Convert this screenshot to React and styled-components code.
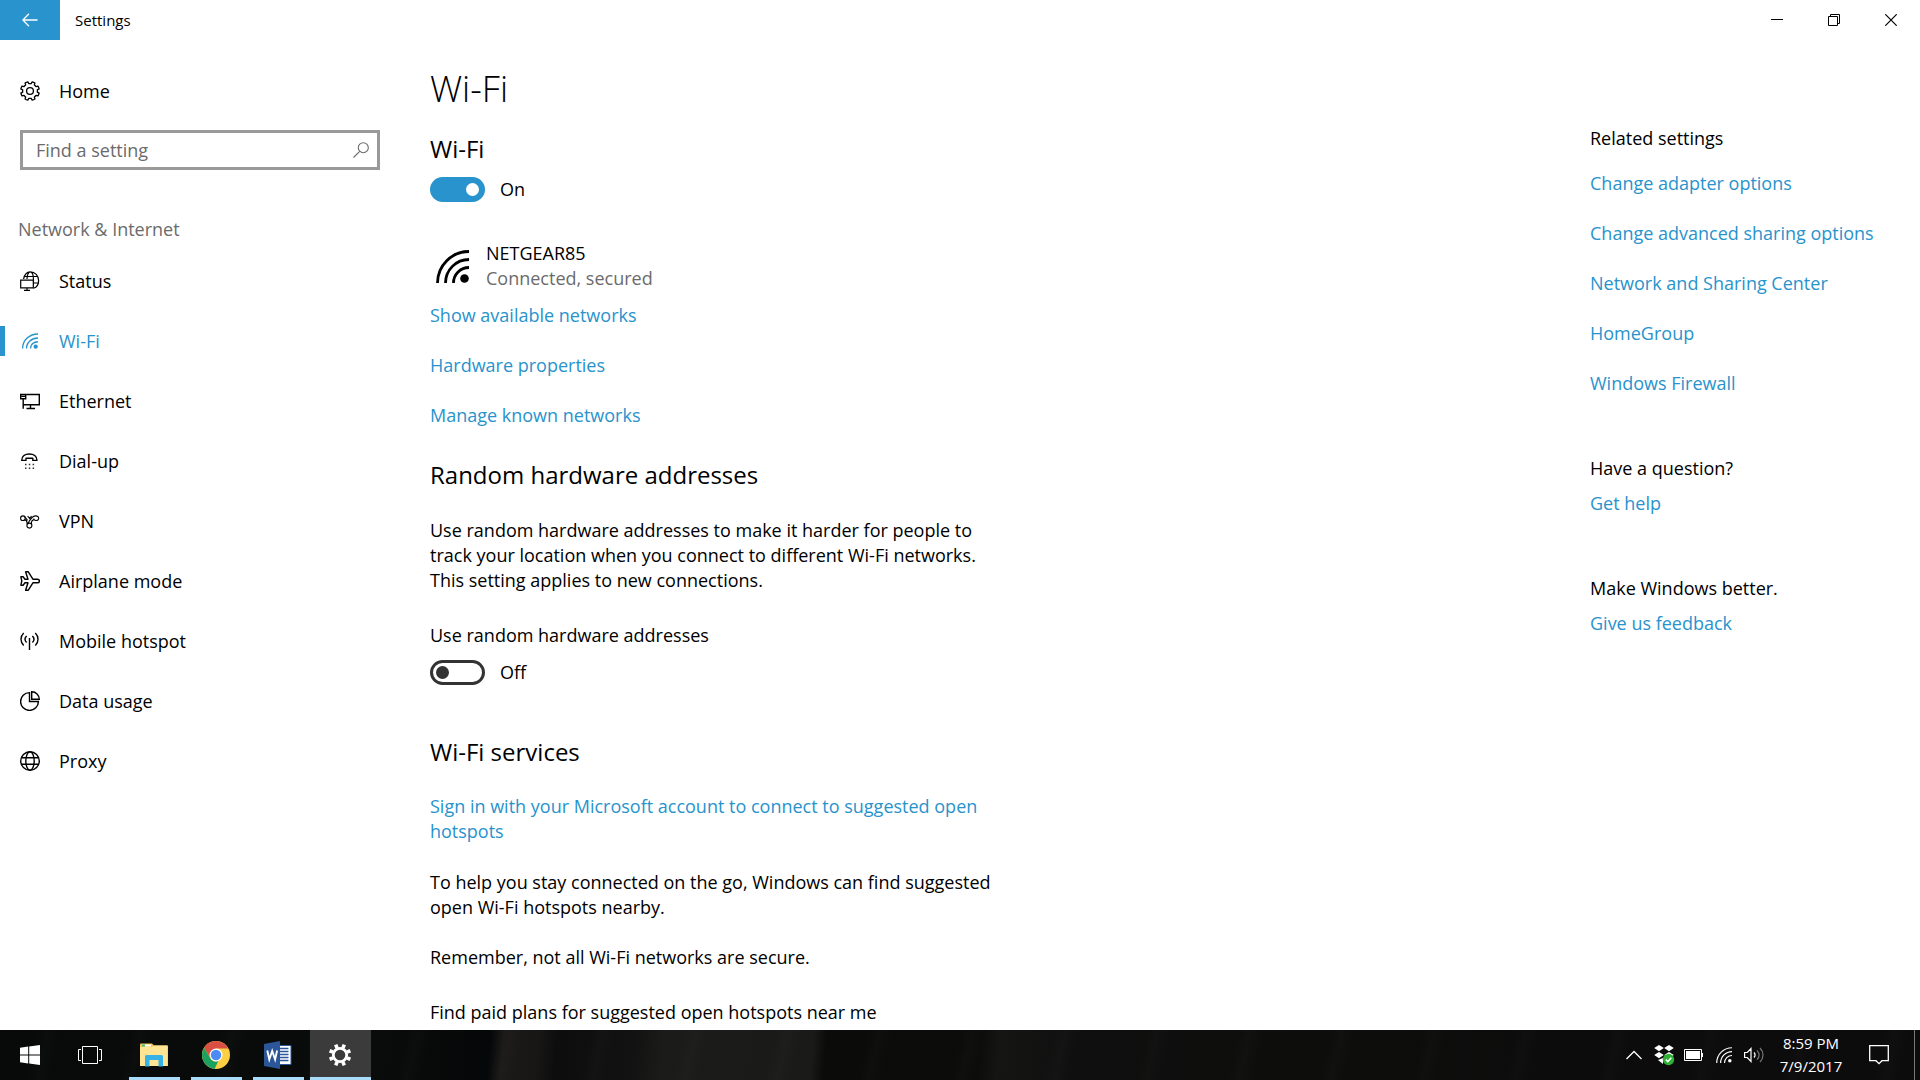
import React, { useState } from "react";
import styled, { createGlobalStyle } from "styled-components";

const ACCENT = "#2893cc";

const GlobalStyle = createGlobalStyle`
  *, *::before, *::after { box-sizing: border-box; }
  body {
    margin: 0;
    background: #fff;
    color: #000;
    font: 400 18px/25px "Open Sans", "Noto Sans", sans-serif;
  }
  button, input { font: inherit; color: inherit; }
  h1, h2, h3, p, ul { margin: 0; padding: 0; font-weight: 400; }
  ul { list-style: none; }
  svg { display: block; flex: none; }
`;

const Desktop = styled.div`
  display: flex;
  flex-direction: column;
  height: 100vh;
  overflow: hidden;
`;

const PlainButton = styled.button`
  display: flex;
  align-items: center;
  justify-content: center;
  padding: 0;
  border: 0;
  background: none;
`;

/* Title bar */
const TitleBar = styled.header`
  display: flex;
  flex: none;
  height: 40px;
  padding-right: 1px;
`;
const BackButton = styled(PlainButton)`
  width: 60px;
  background: ${ACCENT};
  color: #fff;
`;
const WindowTitle = styled.span`
  flex: 1;
  padding-left: 15px;
  font-size: 15px;
  line-height: 40px;
`;
const WindowButton = styled(PlainButton)`
  width: 57px;
`;

/* Page */
const Body = styled.div`
  display: flex;
  flex: 1;
  min-height: 0;
  overflow: hidden;
`;
const Sidebar = styled.nav`
  flex: none;
  width: 400px;
  padding-top: 21px;
`;
const NavLink = styled.a`
  display: flex;
  align-items: center;
  gap: 19px;
  height: 60px;
  padding-left: 20px;
  color: ${(p) => (p.$active ? ACCENT : "#000")};
  text-decoration: none;
  background: ${(p) => (p.$active ? `linear-gradient(${ACCENT}, ${ACCENT}) 0 50% / 5px 30px no-repeat` : "none")};
`;
const SearchBox = styled.form`
  display: flex;
  height: 40px;
  margin: 9px 20px 40px;
  border: 3px solid #999;
  color: #6b6b6b;
`;
const SearchInput = styled.input`
  flex: 1;
  min-width: 0;
  padding: 0 0 0 13px;
  border: 0;
  outline: 0;
  background: none;
  &::placeholder { color: #6b6b6b; opacity: 1; }
`;
const SearchButton = styled(PlainButton)`
  width: 33px;
`;
const NavHeading = styled.h2`
  height: 41px;
  padding: 7px 0 0 18px;
  color: #6b6b6b;
  font-size: 18px;
  line-height: 25px;
`;

const Main = styled.main`
  flex: 1;
  min-width: 0;
  padding: 25px 30px 0;
`;
const Column = styled.div`
  max-width: 580px;
`;
const PageTitle = styled.h1`
  font-size: 36px;
  font-weight: 300;
  line-height: 48px;
`;
const SectionTitle = styled.h2`
  margin-top: ${(p) => p.$space}px;
  font-size: 24px;
  line-height: 32px;
`;
const Text = styled.p`
  margin-top: ${(p) => p.$space || 0}px;
  color: ${(p) => (p.$muted ? "#6b6b6b" : "inherit")};
`;
const LinkText = styled.a`
  color: ${ACCENT};
  text-decoration: none;
`;
const LinkList = styled.ul`
  display: grid;
  gap: 25px;
  margin-top: ${(p) => p.$space}px;
`;
const ToggleRow = styled.label`
  display: flex;
  gap: 15px;
  margin-top: 12px;
`;
const Toggle = styled.input`
  appearance: none;
  flex: none;
  display: flex;
  align-items: center;
  width: 55px;
  height: 25px;
  margin: 0;
  padding: 0 3px;
  border: 3px solid #333;
  border-radius: 13px;
  &::before {
    content: "";
    width: 13px;
    height: 13px;
    border-radius: 50%;
    background: #333;
  }
  &:checked {
    justify-content: flex-end;
    border-color: ${ACCENT};
    background: ${ACCENT};
  }
  &:checked::before { background: #fff; }
`;
const Network = styled.div`
  display: flex;
  align-items: center;
  gap: 17px;
  margin-top: 39px;
  padding-left: 6px;
`;

const Related = styled.aside`
  flex: none;
  width: 330px;
  padding-top: 86px;
`;
const RelatedGroup = styled.section`
  margin-bottom: 60px;
`;
const RelatedTitle = styled.h3`
  font-size: 18px;
`;

/* Taskbar */
const Taskbar = styled.footer`
  display: flex;
  flex: none;
  height: 50px;
  color: #fff;
  background:
    repeating-linear-gradient(103deg, transparent 0 37px, rgba(255, 255, 255, 0.015) 48px, transparent 61px 90px),
    linear-gradient(95deg, #080909 0%, #0a0b0b 20%, #050808 25.5%, #1a1918 26.2%, #181716 28%, #0d0d0d 29%, #121212 33%, #1b1b19 34.5%, #1a1a18 42.3%, #0b0b0a 43%, #0c0c0b 51%, #151514 52%, #0f0f0f 56%, #0d0d0c 70%, #0b0c0b 80%, #0c0c0c 100%);
`;
const TaskButton = styled(PlainButton)`
  width: 60px;
`;
const Apps = styled.div`
  display: flex;
  flex: 1;
  gap: 1px;
  padding-left: 4px;
`;
const AppButton = styled(PlainButton)`
  width: 61px;
  padding-right: 2px;
  background:
    linear-gradient(#a9dbfb, #a9dbfb) 50% 100% / ${(p) => (p.$active ? 61 : 51)}px 3px no-repeat,
    ${(p) => (p.$active ? "#3b3b3b" : "transparent")};
`;
const Tray = styled.div`
  display: flex;
  align-items: center;
`;
const TrayIcons = styled.div`
  display: flex;
  margin-right: 9px;
`;
const TrayButton = styled(PlainButton)`
  width: 30px;
  height: 50px;
`;
const Clock = styled.button`
  width: 66px;
  padding: 0;
  border: 0;
  background: none;
  font-size: 15px;
  line-height: 23px;
  text-align: center;
`;
const ActionButton = styled(PlainButton)`
  width: 70px;
  height: 50px;
`;
const ShowDesktop = styled(PlainButton)`
  width: 6px;
  height: 50px;
  border-left: 1px solid #777;
`;

/* Icons */
const Icon = ({ size = 20, w, h, children, stroke = 1.4, box }) => (
  <svg
    width={w || size}
    height={h || size}
    viewBox={box || `0 0 ${w || size} ${h || size}`}
    fill="none"
    stroke="currentColor"
    strokeWidth={stroke}
    aria-hidden="true"
  >
    {children}
  </svg>
);

const gearPath = (cx, cy, outer, inner, teeth, wide, narrow) => {
  const step = (Math.PI * 2) / teeth;
  const at = (r, a) => `${(cx + r * Math.cos(a)).toFixed(2)} ${(cy + r * Math.sin(a)).toFixed(2)}`;
  let d = "";
  for (let i = 0; i < teeth; i += 1) {
    const a = i * step + step / 2;
    d += `${i ? "L" : "M"}${at(inner, a - step * wide)}L${at(outer, a - step * narrow)}`;
    d += `A${outer} ${outer} 0 0 1 ${at(outer, a + step * narrow)}L${at(inner, a + step * wide)}`;
    d += `A${inner} ${inner} 0 0 1 ${at(inner, a + step - step * wide)}`;
  }
  return `${d}Z`;
};

const HomeIcon = () => (
  <Icon stroke={1.3}>
    <path d={gearPath(10, 10, 9.4, 7.4, 8, 0.3, 0.2)} strokeLinejoin="round" />
    <circle cx="10" cy="10" r="3.4" />
  </Icon>
);
const StatusIcon = () => (
  <Icon stroke={1.2}>
    <path d="M3.6 8C4.5 3.6 7 .9 10.2.9c4.900 0 8.400 3.800 8.400 8.600 0 4.300-2 6.900-5 7.800M4.300 5.500h13.200M13.500 12h4.600M7 8c.3-4.300 1.500-7.100 3.200-7.100 2 0 3.300 3.300 3.300 8.600 0 2.300-.1 3.500-.5 5" />
    <path d="M.700 9.200h12.600v7.600H.700z" fill="#fff" />
    <path d="M7 17v2.300M4 19.300h6" />
  </Icon>
);
const WifiArcs = ({ size, stroke, dot }) => (
  <svg width={size} height={size} viewBox="0 0 33 33" fill="none" stroke="currentColor" strokeWidth={stroke} aria-hidden="true">
    <path d="M1.500 33A31.500 31.500 0 0 1 33 1.500M9.500 33A23.500 23.500 0 0 1 33 9.500M17.500 33A15.500 15.500 0 0 1 33 17.500" />
    <circle cx="28.500" cy="28.500" r={dot} fill="currentColor" stroke="none" />
  </svg>
);
const WifiNavIcon = () => (
  <Icon>
    <path d="M2.600 17.500C2.600 9 9.500 3 18 3M6.500 17.500C6.500 11.500 11.500 7 18 7M10.500 17.500c0-4 3.200-6.800 7.500-6.800" />
    <circle cx="15.700" cy="15.700" r="2.100" fill="currentColor" stroke="none" />
  </Icon>
);
const EthernetIcon = () => (
  <Icon>
    <path d="M6.500 3.500h12.800v10.200H3.500M.700 3.500h5v4.300h-5zM1.500 5.400h3.500M3.200 8v9.800M10.500 13.700v3.800M6.500 17.500H15" />
  </Icon>
);
const DialIcon = () => (
  <Icon>
    <path d="M1.700 9.400C1.700 5.200 5 3 9.300 3S17 5.200 17 9.400h-4.200V7.200H6v2.200z" strokeLinejoin="round" />
    <path d="M5 13.500h1.500M8.800 13.500h1.500M12.600 13.500h1.500M5 17.300h1.500M8.800 17.300h1.500M12.600 17.300h1.500" stroke="#333" />
  </Icon>
);
const VpnIcon = () => (
  <Icon stroke={1.1}>
    <circle cx="2.900" cy="7.200" r="2.300" />
    <circle cx="9.400" cy="14.600" r="2.500" />
    <path d="M4.800 5.800c1.400 1.300 2.300 2.600 2.500 3.900M4.900 8.400c1.900 1 2.500 2.300 2.300 5M7.600 5l2 2.400 2-2.400M11.600 13.400c-.5-2.500.5-4.400 2.500-4.800M7.800 12.700c1.500-2.500 3.300-7.200 7.500-7.800 2-.2 3.400.900 3.400 2.400s-1.300 2.300-2.700 2.200c-1.300 0-2.300-.900-2.300-2.100" />
  </Icon>
);
const PlaneIcon = () => (
  <Icon>
    <path d="M.9 5.800h2.200l1.900 2.400h3L5.600.8h2.700l4.600 7.400h4.700c1.200 0 1.800.8 1.800 1.800s-.6 1.800-1.800 1.800h-4.700l-4.600 7.400H5.600L8 11.800H5l-1.900 2.400H.9L1.800 10z" strokeLinejoin="round" />
  </Icon>
);
const HotspotIcon = () => (
  <Icon>
    <path d="M9.500 7v12M6.600 5c-1.900 1.900-1.900 4.600 0 6.500M12.400 5c1.900 1.900 1.900 4.600 0 6.500M3.700 2c-3.600 3.500-3.600 9 0 12.500M15.300 2c3.600 3.500 3.600 9 0 12.500" />
  </Icon>
);
const DataIcon = () => (
  <Icon>
    <path d="M9.500 1.600a8.900 8.900 0 1 0 8.900 8.900H9.500z" />
    <path d="M11.700.7a7.600 7.600 0 0 1 7.600 7.600h-7.600z" />
  </Icon>
);
const GlobeIcon = () => (
  <Icon>
    <circle cx="10" cy="10" r="9.300" />
    <ellipse cx="10" cy="10" rx="4.200" ry="9.300" />
    <path d="M1.500 6.700h17M1.500 13.300h17" />
  </Icon>
);
const SearchIcon = () => (
  <Icon size={16} stroke={1.1}>
    <circle cx="10.300" cy="5.700" r="5" />
    <path d="M6.700 9.300L.5 15.500" />
  </Icon>
);

const ExplorerIcon = () => (
  <svg width="28" height="24" viewBox="0 0 28 24" aria-hidden="true">
    <path d="M0 1.500Q0 .5 1 .5h11l2 2h13q1 0 1 1V23H0z" fill="#f2c74b" />
    <path d="M0 4h12l2-1.500h13.500V23H0z" fill="#ffe593" />
    <path d="M2 1.500h9v2H2z" fill="#fff" />
    <path d="M2 1.500h3v2H2z" fill="#49b36b" />
    <path d="M5 23V13.500Q5 12 6.500 12h15q1.500 0 1.500 1.500V23.500h-4.500V17h-9v6.500H5z" fill="#38b1e6" />
  </svg>
);
const ChromeIcon = () => (
  <svg width="28" height="28" viewBox="0 0 28 28" aria-hidden="true">
    <circle cx="14" cy="14" r="14" fill="#fccf43" />
    <path d="M14 0A14 14 0 0 1 26.300 7.500H14L8.400 17.300 2 6.800A14 14 0 0 1 14 0z" fill="#da4f43" />
    <path d="M2 6.800l6.300 10.400a6.500 6.500 0 0 0 8 2.900L12.600 27.900A14 14 0 0 1 2 6.800z" fill="#1ba261" />
    <circle cx="14" cy="14" r="6.500" fill="#fff" />
    <circle cx="14" cy="14" r="5.200" fill="#4c8bf5" />
  </svg>
);
const WordIcon = () => (
  <svg width="28" height="28" viewBox="0 0 28 28" aria-hidden="true">
    <path d="M15 4.500h12v19H15z" fill="#fff" stroke="#2b579a" />
    <path d="M16 7.500h8.500M16 10.500h8.500M16 13.500h8.500M16 16.500h8.500M16 19.500h8.500" stroke="#2b579a" strokeWidth="1.400" />
    <path d="M0 3l16-3v28L0 25z" fill="#2b579a" />
    <path d="M3.300 9.500l2 9 2.900-8.500 2.900 8.500 2-9" fill="none" stroke="#fff" strokeWidth="1.900" />
  </svg>
);
const TaskGearIcon = () => (
  <svg width="24" height="24" viewBox="0 0 24 24" fill="none" stroke="#fff" aria-hidden="true">
    <circle cx="12" cy="12" r="6.700" strokeWidth="2.800" />
    <g strokeWidth="3.600">
      {[22.5, 67.5, 112.5, 157.5, 202.5, 247.5, 292.5, 337.5].map((angle) => (
        <path key={angle} d="M12 4.500V.8" transform={`rotate(${angle} 12 12)`} />
      ))}
    </g>
  </svg>
);
const DropboxIcon = () => (
  <svg width="21" height="21" viewBox="0 0 21 21" aria-hidden="true">
    <path d="M5 0l4.800 3L5 6.200.2 3zM15 0l4.800 3L15 6.200 10.200 3zM5 7l4.800 3L5 13.200.2 10zM15 7l4.800 3L15 13.200 10.200 10zM4 15l5-2v6z" fill="#fff" />
    <circle cx="14.500" cy="14.500" r="5.700" fill="#2eb135" />
    <path d="M11.800 14.600l2 2 3.500-3.800" fill="none" stroke="#fff" strokeWidth="1.500" />
  </svg>
);

const NAV = [
  ["Status", StatusIcon],
  ["Wi-Fi", WifiNavIcon],
  ["Ethernet", EthernetIcon],
  ["Dial-up", DialIcon],
  ["VPN", VpnIcon],
  ["Airplane mode", PlaneIcon],
  ["Mobile hotspot", HotspotIcon],
  ["Data usage", DataIcon],
  ["Proxy", GlobeIcon],
];
const NETWORK_LINKS = ["Show available networks", "Hardware properties", "Manage known networks"];
const RELATED_LINKS = [
  "Change adapter options",
  "Change advanced sharing options",
  "Network and Sharing Center",
  "HomeGroup",
  "Windows Firewall",
];

const Links = ({ items, space }) => (
  <LinkList $space={space}>
    {items.map((item) => (
      <li key={item}>
        <LinkText href="#">{item}</LinkText>
      </li>
    ))}
  </LinkList>
);

const Switch = ({ initial, label }) => {
  const [on, setOn] = useState(initial);
  return (
    <ToggleRow>
      <Toggle type="checkbox" role="switch" aria-label={label} checked={on} onChange={() => setOn(!on)} />
      <span>{on ? "On" : "Off"}</span>
    </ToggleRow>
  );
};

export default function App() {
  return (
    <Desktop>
      <GlobalStyle />
      <TitleBar>
        <BackButton aria-label="Back">
          <Icon w={16} h={14} stroke={1.3}>
            <path d="M15.500 7H1M7 .8L.9 7 7 13.200" />
          </Icon>
        </BackButton>
        <WindowTitle>Settings</WindowTitle>
        <WindowButton aria-label="Minimize">
          <Icon size={12} stroke={1}><path d="M0 5.500h12" /></Icon>
        </WindowButton>
        <WindowButton aria-label="Restore">
          <Icon size={12} stroke={1}><path d="M.5 2.500h9v9h-9zM2.500 2.500v-2h9v9h-2" /></Icon>
        </WindowButton>
        <WindowButton aria-label="Close">
          <Icon size={12} stroke={1.2}><path d="M.3.3l11.400 11.400M11.700.3L.3 11.700" /></Icon>
        </WindowButton>
      </TitleBar>

      <Body>
        <Sidebar>
          <NavLink href="#"><HomeIcon />Home</NavLink>
          <SearchBox onSubmit={(e) => e.preventDefault()}>
            <SearchInput type="text" placeholder="Find a setting" aria-label="Find a setting" />
            <SearchButton aria-label="Search"><SearchIcon /></SearchButton>
          </SearchBox>
          <NavHeading>Network &amp; Internet</NavHeading>
          {NAV.map(([name, Glyph]) => (
            <NavLink key={name} href="#" $active={name === "Wi-Fi"}>
              <Glyph />
              {name}
            </NavLink>
          ))}
        </Sidebar>

        <Main>
          <Column>
            <PageTitle>Wi-Fi</PageTitle>
            <SectionTitle $space={20}>Wi-Fi</SectionTitle>
            <Switch initial label="Wi-Fi" />
            <Network>
              <WifiArcs size={33} stroke={2.800} dot={4.300} />
              <div>
                <Text>NETGEAR85</Text>
                <Text $muted>Connected, secured</Text>
              </div>
            </Network>
            <Links items={NETWORK_LINKS} space={12} />

            <SectionTitle $space={31}>Random hardware addresses</SectionTitle>
            <Text $space={27}>
              Use random hardware addresses to make it harder for people to track your location when you connect to
              different Wi-Fi networks. This setting applies to new connections.
            </Text>
            <Text $space={30}>Use random hardware addresses</Text>
            <Switch initial={false} label="Use random hardware addresses" />

            <SectionTitle $space={51}>Wi-Fi services</SectionTitle>
            <Text $space={26}>
              <LinkText href="#">Sign in with your Microsoft account to connect to suggested open hotspots</LinkText>
            </Text>
            <Text $space={26}>
              To help you stay connected on the go, Windows can find suggested open Wi-Fi hotspots nearby.
            </Text>
            <Text $space={25}>Remember, not all Wi-Fi networks are secure.</Text>
            <Text $space={30}>Find paid plans for suggested open hotspots near me</Text>
          </Column>
        </Main>

        <Related>
          <RelatedGroup>
            <RelatedTitle>Related settings</RelatedTitle>
            <Links items={RELATED_LINKS} space={20} />
          </RelatedGroup>
          <RelatedGroup>
            <RelatedTitle>Have a question?</RelatedTitle>
            <Links items={["Get help"]} space={10} />
          </RelatedGroup>
          <RelatedGroup>
            <RelatedTitle>Make Windows better.</RelatedTitle>
            <Links items={["Give us feedback"]} space={10} />
          </RelatedGroup>
        </Related>
      </Body>

      <Taskbar>
        <TaskButton aria-label="Start">
          <svg width="20" height="20" viewBox="0 0 20 20" fill="#fff" aria-hidden="true">
            <path d="M0 2.800L8.200 1.600v7.900H0zM9.200 1.500L20 0v9.500H9.200zM0 10.500h8.200v7.900L0 17.200zM9.200 10.500H20V20L9.200 18.500z" />
          </svg>
        </TaskButton>
        <TaskButton aria-label="Task View">
          <Icon w={24} h={18} stroke={1}>
            <path d="M4.500.5h15v17h-15zM3 3.500H.5v11H3M21 3.500h2.500v11H21" />
          </Icon>
        </TaskButton>
        <Apps>
          <AppButton aria-label="File Explorer"><ExplorerIcon /></AppButton>
          <AppButton aria-label="Chrome"><ChromeIcon /></AppButton>
          <AppButton aria-label="Word"><WordIcon /></AppButton>
          <AppButton aria-label="Settings" $active><TaskGearIcon /></AppButton>
        </Apps>
        <Tray>
          <TrayIcons>
            <TrayButton aria-label="Show hidden icons">
              <Icon w={16} h={10} stroke={1.300}><path d="M.5 9L8 1.500 15.500 9" /></Icon>
            </TrayButton>
            <TrayButton aria-label="Dropbox"><DropboxIcon /></TrayButton>
            <TrayButton aria-label="Battery">
              <Icon w={20} h={12} stroke={1}>
                <path d="M.5.5h17v11H.5zM18.500 4v4" />
                <path d="M2 2h14v8H2z" fill="#fff" stroke="none" />
              </Icon>
            </TrayButton>
            <TrayButton aria-label="Network"><WifiArcs size={16} stroke={2.400} dot={3.600} /></TrayButton>
            <TrayButton aria-label="Volume">
              <Icon w={20} h={16} stroke={1.200}>
                <path d="M.6 5.500h2.700L7 1.500v13l-3.700-4H.6zM10 5.500c1.300 1.500 1.300 3.500 0 5" />
                <path d="M13 3.300c2.500 2.800 2.500 6.600 0 9.400M16 1c4 4 4 10 0 14" stroke="#777" />
              </Icon>
            </TrayButton>
          </TrayIcons>
          <Clock>8:59 PM<br />7/9/2017</Clock>
          <ActionButton aria-label="Action center">
            <Icon w={20} h={20} stroke={1.300}><path d="M.7.7h18.600v15H13l-3 3-3-3H.7z" /></Icon>
          </ActionButton>
          <ShowDesktop aria-label="Show desktop" />
        </Tray>
      </Taskbar>
    </Desktop>
  );
}
